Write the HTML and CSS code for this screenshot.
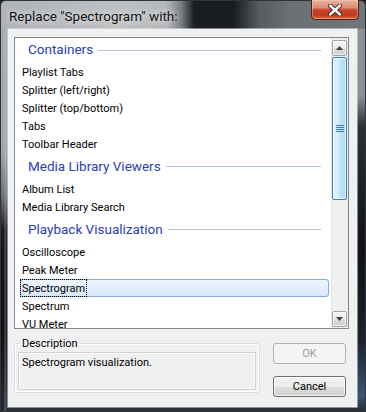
FILE: index.html
```html
<!DOCTYPE html>
<html>
<head>
<meta charset="utf-8">
<link rel="stylesheet" href="styles.css">
</head>
<body>
<div class="win">
  <div class="titlebar">
    <span class="title">Replace "Spectrogram" with:</span>
    <div class="close">
      <svg width="14" height="12" viewBox="0 0 14 12">
        <path d="M2 1.5 L12 10.5 M12 1.5 L2 10.5" stroke="#3a2a28" stroke-width="4.4" stroke-linecap="round" fill="none"/>
        <path d="M2 1.5 L12 10.5 M12 1.5 L2 10.5" stroke="#ffffff" stroke-width="2.4" stroke-linecap="round" fill="none"/>
      </svg>
    </div>
  </div>
  <div class="client">
    <div class="listbox">
      <div class="list">
        <div class="group first"><span>Containers</span><i></i></div>
        <div class="item">Playlist Tabs</div>
        <div class="item">Splitter (left/right)</div>
        <div class="item">Splitter (top/bottom)</div>
        <div class="item">Tabs</div>
        <div class="item">Toolbar Header</div>
        <div class="group"><span>Media Library Viewers</span><i></i></div>
        <div class="item">Album List</div>
        <div class="item">Media Library Search</div>
        <div class="group"><span>Playback Visualization</span><i></i></div>
        <div class="item">Oscilloscope</div>
        <div class="item">Peak Meter</div>
        <div class="item selected"><span class="focus">Spectrogram</span></div>
        <div class="item">Spectrum</div>
        <div class="item">VU Meter</div>
      </div>
      <div class="scrollbar">
        <div class="sb-btn">
          <svg width="7" height="4" viewBox="0 0 7 4"><path d="M3.5 0 L7 4 L0 4 Z" fill="#404040"/></svg>
        </div>
        <div class="thumb">
          <svg width="8" height="7" viewBox="0 0 8 7">
            <rect x="0" y="0" width="8" height="1" fill="#3d7bad"/>
            <rect x="0" y="2" width="8" height="1" fill="#3d7bad"/>
            <rect x="0" y="4" width="8" height="1" fill="#3d7bad"/>
            <rect x="0" y="6" width="8" height="1" fill="#3d7bad"/>
          </svg>
        </div>
        <div class="track"></div>
        <div class="sb-btn">
          <svg width="7" height="4" viewBox="0 0 7 4"><path d="M0 0 L7 0 L3.5 4 Z" fill="#404040"/></svg>
        </div>
      </div>
    </div>
    <div class="bottom">
      <fieldset class="desc">
        <legend>Description</legend>
        <div class="desc-text">Spectrogram visualization.</div>
      </fieldset>
      <div class="buttons">
        <button class="btn" disabled>OK</button>
        <button class="btn">Cancel</button>
      </div>
    </div>
  </div>
</div>
</body>
</html>
```
FILE: styles.css
```css
html, body {
  margin: 0;
  padding: 0;
}
body {
  width: 366px;
  height: 412px;
  overflow: hidden;
  background: #1b1e22;
  font-family: "Segoe UI", Roboto, "Liberation Sans", sans-serif;
  font-size: 11px;
  color: #000;
}
.win {
  box-sizing: border-box;
  width: 366px;
  height: 412px;
  display: flex;
  flex-direction: column;
  border: 1px solid #30343a;
  border-radius: 6px 6px 0 0;
  background:
    linear-gradient(to right, rgba(255,255,255,0) 3px, rgba(210,215,220,0.35) 4px, rgba(255,255,255,0) 6px) left top / 8px 100% no-repeat,
    linear-gradient(to bottom, #a7acb1 0, #9fa5aa 150px, #6d7278 195px, #17191c 230px, #0e1013 330px, #262b31 412px) left top / 8px 100% no-repeat,
    linear-gradient(to bottom, #8e949a 0, #8a9096 95px, #2c3136 125px, #101215 250px, #1c232c 340px, #3c5576 395px, #20262e 412px) right top / 9px 100% no-repeat,
    #2a2f35;
}
.titlebar {
  height: 28px;
  flex: none;
  display: flex;
  justify-content: space-between;
  align-items: flex-start;
  border-radius: 5px 5px 0 0;
  background: linear-gradient(to right, #aeb2b6 0, #bec1c4 120px, #b6b9bc 165px, #7b8085 180px, #1b1f24 193px, #181c21 232px, #565b60 258px, #6b7075 290px, #70757a 100%);
}
.title {
  padding-left: 8px;
  line-height: 30px;
  font-size: 13.5px;
  color: #111;
  text-shadow: 0 0 6px rgba(255,255,255,0.7), 0 0 10px rgba(255,255,255,0.5);
}
.close {
  width: 46px;
  height: 19px;
  margin-right: 6px;
  margin-top: -1px;
  display: flex;
  align-items: center;
  justify-content: center;
  border: 1px solid #4a2018;
  border-top: none;
  border-radius: 0 0 5px 5px;
  background: linear-gradient(to bottom, #eab2a3 0, #db8c77 40%, #c8452a 52%, #c2381d 80%, #dc6a3f 100%);
  box-shadow: inset 0 0 0 1px rgba(255,210,190,0.45);
}
.close svg { display: block; margin-top: 1px; }
.client {
  flex: 1;
  margin: 0 8px 8px 7px;
  padding: 8px 8px 10px 6px;
  background: #f0f0f0;
  display: flex;
  flex-direction: column;
  box-shadow: 0 0 0 1px rgba(225,228,232,0.55);
}
.listbox {
  box-sizing: border-box;
  width: 335px;
  height: 292px;
  flex: none;
  display: flex;
  border: 1px solid #828790;
  background: #fff;
}
.list {
  flex: 1;
  padding: 0 2px 0 5px;
  overflow: hidden;
}
.group {
  box-sizing: border-box;
  height: 27px;
  padding-bottom: 2px;
  display: flex;
  align-items: center;
  padding-left: 8px;
  font-size: 13.5px;
  color: #2a41b5;
}
.group.first {
  height: 25px;
  padding-bottom: 3px;
}
.group i {
  flex: 1;
  height: 1px;
  margin: 2px 8px 0 5px;
  background: #b3c2e3;
}
.item {
  box-sizing: border-box;
  height: 18px;
  line-height: 14px;
  padding-top: 2px;
  border: 1px solid transparent;
  padding-left: 1px;
  white-space: nowrap;
}
.item.selected {
  padding-top: 0;
  border-color: #84acdd;
  border-radius: 3px;
  background: linear-gradient(to bottom, #eef5fd, #d6e7fb);
}
.focus {
  display: inline-block;
  box-sizing: border-box;
  height: 18px;
  line-height: 14px;
  margin: -1px 0 -1px -2px;
  padding: 2px 1px 0 1px;
  border: 1px dotted #000;
  vertical-align: top;
}
.scrollbar {
  width: 17px;
  flex: none;
  box-sizing: border-box;
  padding: 2px 1px 1px 1px;
  display: flex;
  flex-direction: column;
  background: linear-gradient(to right, #e4e4e4 0, #f1f1f1 2px, #ededed 100%);
}
.sb-btn {
  box-sizing: border-box;
  height: 16px;
  flex: none;
  display: flex;
  align-items: center;
  justify-content: center;
  border: 1px solid #a3a3a3;
  border-radius: 2px;
  background: linear-gradient(to bottom, #f6f6f6 0, #eaeaea 50%, #dcdcdc 51%, #cfcfcf 100%);
  box-shadow: inset 0 0 0 1px rgba(255,255,255,0.7);
}
.sb-btn svg { display: block; }
.thumb {
  box-sizing: border-box;
  height: 143px;
  flex: none;
  margin-top: 1px;
  display: flex;
  align-items: center;
  justify-content: center;
  border: 1px solid #3c7fb1;
  border-radius: 2px;
  background: linear-gradient(to right, #e5f4fc 0, #d4ecf9 40%, #bfe2f7 55%, #aed9f3 100%);
  box-shadow: inset 0 0 0 1px rgba(255,255,255,0.6);
}
.thumb svg { display: block; }
.track { flex: 1; }
.bottom {
  display: flex;
  margin-top: 7px;
}
.desc {
  box-sizing: border-box;
  width: 246px;
  height: 57px;
  margin: 0;
  padding: 0 3px 2px 3px;
  border: 1px solid #d5dfe5;
  border-radius: 3px;
  box-shadow: inset 0 0 0 1px #fff;
}
.desc legend {
  margin-left: 2px;
  padding: 0 2px;
  line-height: 15px;
  font-size: 11px;
}
.desc-text {
  box-sizing: border-box;
  height: 38px;
  margin-top: 1px;
  padding: 2px 3px;
  line-height: 15px;
  border: 1px solid #d3d3d3;
  box-shadow: inset 0 0 0 1px #fbfbfb;
  background: #f0f0f0;
}
.buttons {
  margin-left: 13px;
  padding-top: 7px;
  display: flex;
  flex-direction: column;
  gap: 12px;
}
.btn {
  box-sizing: border-box;
  width: 73px;
  height: 21px;
  margin: 0;
  padding: 0;
  font-family: inherit;
  font-size: 11px;
  color: #000;
  border: 1px solid #707070;
  border-radius: 3px;
  background: linear-gradient(to bottom, #f2f2f2 0, #ebebeb 50%, #dddddd 51%, #cfcfcf 100%);
  box-shadow: inset 0 0 0 1px rgba(255,255,255,0.75);
}
.btn:disabled {
  color: #a0a0a0;
  border-color: #adb2b5;
  background: #f4f4f4;
  box-shadow: none;
}
```
